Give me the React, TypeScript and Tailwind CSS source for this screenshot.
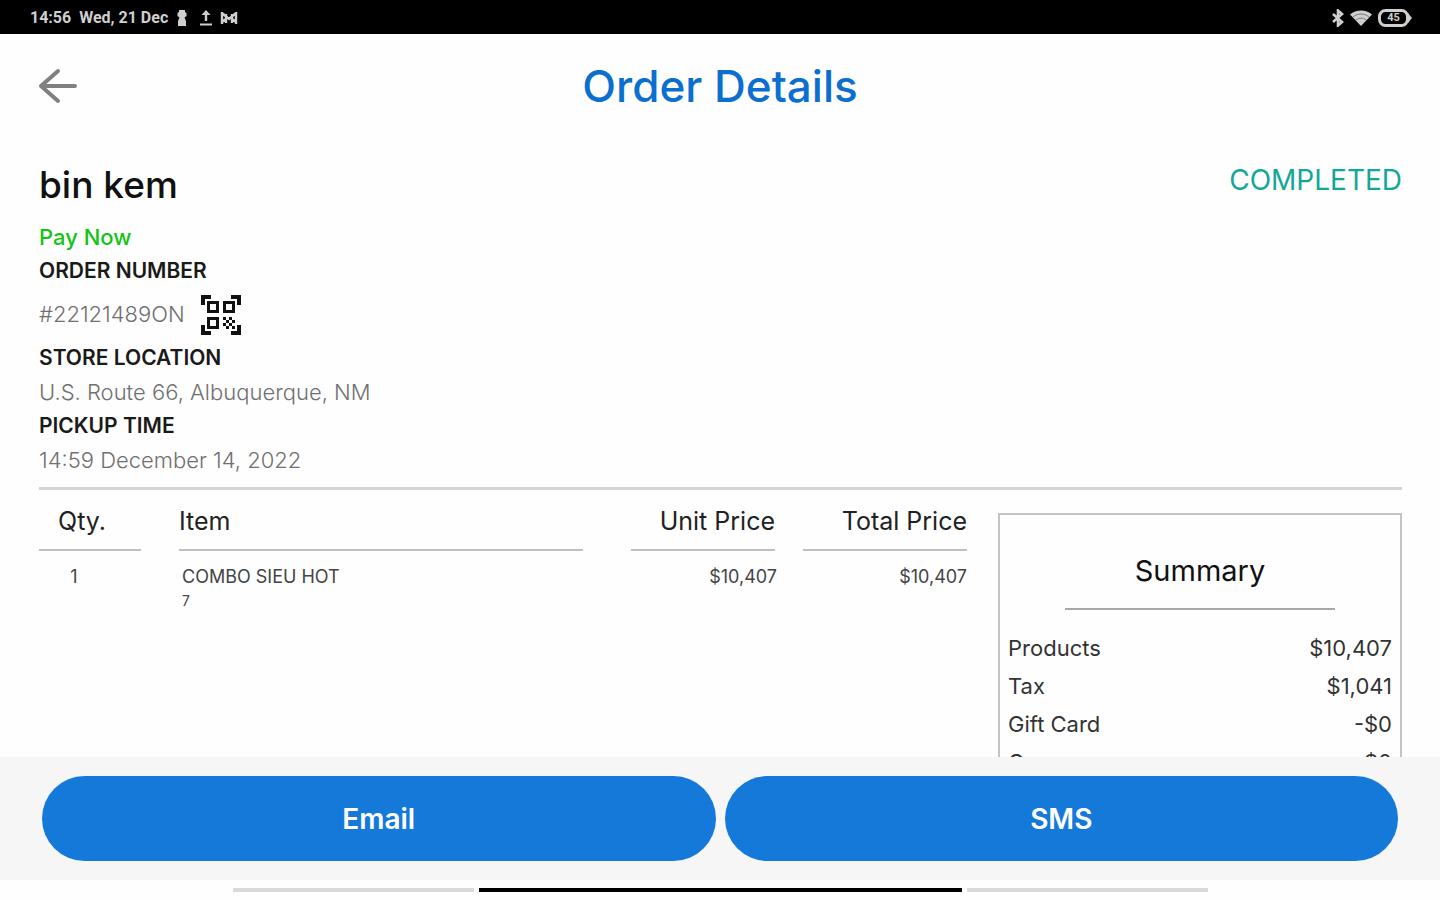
import type { ReactNode } from "react";
import { MdQrCodeScanner } from "react-icons/md";

const items = [
  { qty: "1", name: "COMBO SIEU HOT", note: "7", unit: "$10,407", total: "$10,407" },
];

const summary = [
  { label: "Products", value: "$10,407" },
  { label: "Tax", value: "$1,041" },
  { label: "Gift Card", value: "-$0" },
  { label: "Coupon", value: "-$0" },
];

function StatusBar() {
  return (
    <div className="flex h-[34px] shrink-0 items-center justify-between bg-black pt-px pr-7 pl-[30px] text-[#cfcfcf]">
      <div className="flex items-center gap-2">
        <span className="font-[Roboto] text-base leading-5 font-bold whitespace-pre">14:56  Wed, 21 Dec</span>
        <svg className="h-[18px] w-3" viewBox="0 0 12 18" fill="currentColor" aria-hidden="true">
          <path d="M3 1h6v2l1.500 1v3L8.500 8.500 10 12v5H2v-5l1.500-3.500L1.500 7V4L3 3z" />
        </svg>
        <svg className="ml-1 h-[18px] w-3" viewBox="0 0 12 18" fill="currentColor" aria-hidden="true">
          <path d="M6 1l4.500 5H7.200v6H4.800V6H1.500zM0 14.500h12v2H0z" />
        </svg>
        <svg className="h-[14px] w-[18px]" viewBox="0 0 18 14" fill="none" stroke="currentColor" strokeWidth="2.400" aria-hidden="true">
          <path d="M2 1v12M16 1v12M2 2l7 6 7-6M6 3v9M12 3v9M2 11l4-3M16 11l-4-3" />
        </svg>
      </div>
      <div className="flex items-center gap-[6px]">
        <svg className="h-[18px] w-3" viewBox="0 0 12 18" fill="none" stroke="currentColor" strokeWidth="2.600" aria-hidden="true">
          <path d="M1 5l9 8-4 3.500v-15L10 5l-9 8" />
        </svg>
        <svg className="h-4 w-[22px]" viewBox="0 0 22 16" fill="currentColor" aria-hidden="true">
          <path d="M0 4.500C6-.8 16-.8 22 4.500L11 16z" />
          <path d="M3 7c4.500-4 11.500-4 16 0M6 10c3-2.500 7-2.500 10 0" fill="none" stroke="#777" strokeWidth="1" />
        </svg>
        <div className="relative flex h-[18px] w-[34px] items-center justify-center">
          <svg className="absolute inset-0 h-[18px] w-[34px]" viewBox="0 0 34 18" fill="none" aria-hidden="true">
            <rect x="1.500" y="1.500" width="28" height="15" rx="6" stroke="currentColor" strokeWidth="3" />
            <path d="M30 4l4 5-4 5z" fill="currentColor" />
          </svg>
          <span className="pr-[3px] font-[Roboto] text-[11px] leading-4 font-bold">45</span>
        </div>
      </div>
    </div>
  );
}

function Heading({ children }: { children: ReactNode }) {
  return <dt className="text-[21px] leading-[34px] font-semibold text-[#1a1a1a]">{children}</dt>;
}

function Value({ children }: { children: ReactNode }) {
  return <dd className="text-[22px] leading-[34px] font-light text-[#707070]">{children}</dd>;
}

export default function App() {
  return (
    <div className="flex h-screen flex-col overflow-hidden bg-[#fefefe] font-[Inter,sans-serif] text-[#222222]">
      <StatusBar />

      <header className="grid shrink-0 grid-cols-[1fr_auto_1fr] items-center px-[38px] pt-6 pb-7">
        <button type="button" aria-label="Back" className="w-10 cursor-pointer text-[#808080]">
          <svg
            className="h-9 w-10"
            viewBox="0 0 40 36"
            fill="none"
            stroke="currentColor"
            strokeWidth="4"
            strokeLinecap="round"
            strokeLinejoin="round"
            aria-hidden="true"
          >
            <path d="M37 18H3M20 3L3 18l17 15" />
          </svg>
        </button>
        <h1 className="text-[44px] leading-[56px] font-medium text-[#0b6fd0]">Order Details</h1>
      </header>

      <main className="min-h-0 flex-1 overflow-y-auto pt-5 pr-[38px] pl-[39px] [scrollbar-width:none]">
        <div className="flex items-start justify-between">
          <h2 className="text-[37px] leading-[46px] font-medium text-[#111111]">bin kem</h2>
          <span className="text-[28px] leading-9 text-[#12a796]">COMPLETED</span>
        </div>
        <p className="mt-3 text-[22px] leading-[34px] font-medium text-[#14c414]">Pay Now</p>
        <dl>
          <Heading>ORDER NUMBER</Heading>
          <dd className="flex h-[53px] items-center gap-3 text-[22px] font-light text-[#707070]">
            #22121489ON
            <button type="button" aria-label="Show QR code" className="cursor-pointer text-[#111111]">
              <MdQrCodeScanner className="size-12" />
            </button>
          </dd>
          <Heading>STORE LOCATION</Heading>
          <Value>U.S. Route 66, Albuquerque, NM</Value>
          <Heading>PICKUP TIME</Heading>
          <Value>14:59 December 14, 2022</Value>
        </dl>

        <div className="mt-[10px] flex items-start gap-[31px] border-t-[3px] border-[#d4d4d4]">
          <table className="min-w-0 flex-1 table-fixed border-collapse">
            <thead>
              <tr className="text-[25px] leading-8">
                <th className="w-35 p-0 pr-[38px] font-normal">
                  <div className="border-b-2 border-[#c0c0c0] pt-[15px] pr-4 pb-3">Qty.</div>
                </th>
                <th className="p-0 pr-12 text-left font-normal">
                  <div className="border-b-2 border-[#c0c0c0] pt-[15px] pb-3">Item</div>
                </th>
                <th className="w-43 p-0 pr-7 text-right font-normal">
                  <div className="border-b-2 border-[#c0c0c0] pt-[15px] pb-3">Unit Price</div>
                </th>
                <th className="w-41 p-0 text-right font-normal">
                  <div className="border-b-2 border-[#c0c0c0] pt-[15px] pb-3">Total Price</div>
                </th>
              </tr>
            </thead>
            <tbody>
              {items.map((item) => (
                <tr key={item.name} className="align-top text-lg leading-6 text-[#444444]">
                  <td className="p-0 pt-[14px] pr-[70px] text-center">{item.qty}</td>
                  <td className="p-0 pt-[14px] pl-[3px]">
                    {item.name}
                    <div className="text-sm leading-6">{item.note}</div>
                  </td>
                  <td className="p-0 pt-[14px] pr-[26px] text-right">{item.unit}</td>
                  <td className="p-0 pt-[14px] text-right">{item.total}</td>
                </tr>
              ))}
            </tbody>
          </table>

          <section className="mt-[23px] w-101 shrink-0 border-2 border-[#c4c4c4] px-2 pt-9 pb-6">
            <h3 className="mx-auto w-[270px] border-b-2 border-[#a8a8a8] pb-[17px] text-center text-[29px] leading-10 text-[#111111]">
              Summary
            </h3>
            <dl className="mt-[19px] text-[22px] leading-[38px] text-[#333333]">
              {summary.map((row) => (
                <div key={row.label} className="flex justify-between">
                  <dt>{row.label}</dt>
                  <dd>{row.value}</dd>
                </div>
              ))}
            </dl>
          </section>
        </div>
      </main>

      <footer className="shrink-0">
        <div className="flex gap-[9px] bg-[#f6f6f6] px-[42px] pt-[19px] pb-[19px]">
          <button type="button" className="h-[85px] flex-1 cursor-pointer rounded-full bg-[#1579da] text-[28px] font-semibold text-white">
            Email
          </button>
          <button type="button" className="h-[85px] flex-1 cursor-pointer rounded-full bg-[#1579da] text-[28px] font-semibold text-white">
            SMS
          </button>
        </div>
        <div className="flex h-5 items-center justify-center gap-[5px]">
          <div className="h-1 w-[241px] bg-[#dadada]" />
          <div className="h-1 w-[483px] bg-black" />
          <div className="h-1 w-[241px] bg-[#dadada]" />
        </div>
      </footer>
    </div>
  );
}
